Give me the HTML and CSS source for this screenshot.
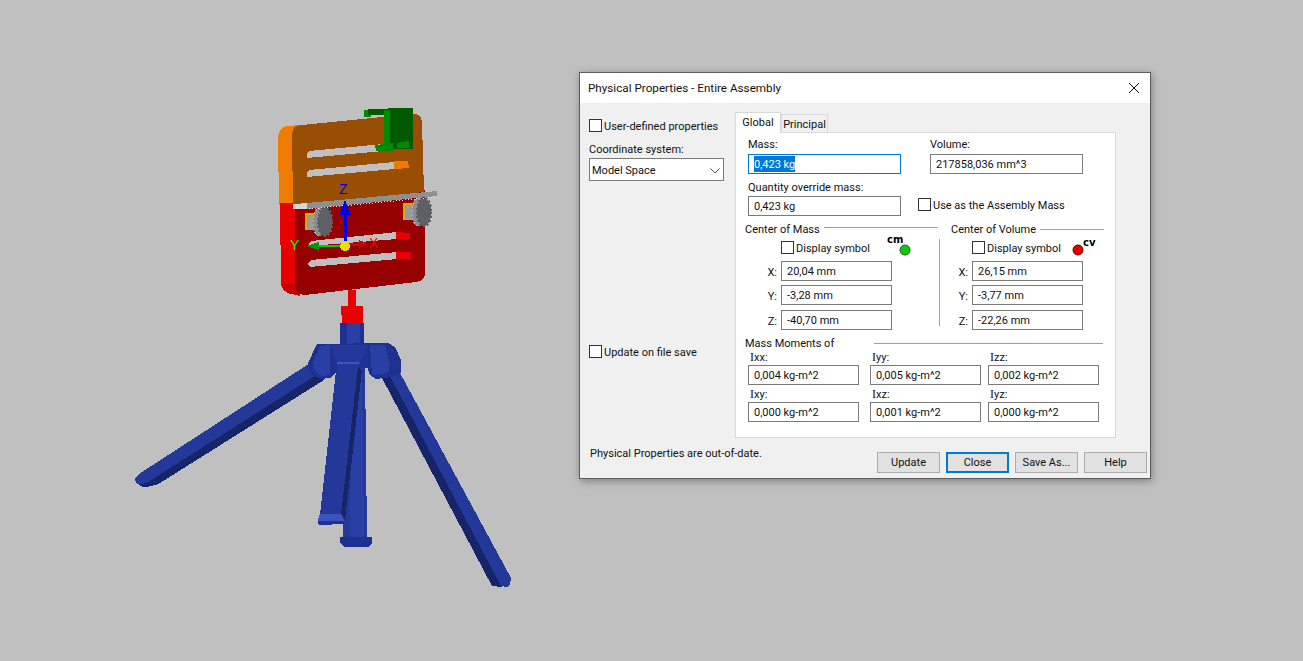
FILE: index.html
```html
<!DOCTYPE html>
<html>
<head>
    <title>Physical Properties - Entire Assembly</title>
    <link rel="stylesheet" href="styles.css">
</head>
<body>
    <svg class="model" viewBox="0 0 1303 661" width="1303" height="661" shape-rendering="crispEdges">
        <!-- tripod -->
        <path fill="#16246a" d="M318,372 L324,380 L160,483 Q152,487 143,487 L138,484 Z"/>
        <path fill="#24389a" d="M307,365 L318,374 L148,482 Q140,486 136,483 L135,479 Q137,475 142,472 Z"/>
        <path fill="#24389a" d="M346,365 L365,365 L367,537 L343,537 Z"/>
        <path fill="#2a3fa6" d="M352,365 L362,365 L364,537 L350,537 Z"/>
        <path fill="#1f3190" d="M340,537 L372,537 L372,543 L369,547 L344,547 L340,543 Z"/>
        <path fill="#24389a" d="M337,362 L360,366 L342,515 L320,515 Z"/>
        <path fill="#16246a" d="M358,367 L362,370 L345,520 L341,514 Z"/>
        <path fill="#3d52bd" d="M320,514 L342,514 L344,521 L318,521 L319,516 Z"/>
        <path fill="#1f3190" d="M318,521 L343,521 L343,524 L320,525 L318,524 Z"/>
        <path fill="#16246a" d="M382,378 L392,377 L502,587 L492,586 Z"/>
        <path fill="#24389a" d="M390,376 L400,373 L511,578 L510,585 L507,587 L501,586 Z"/>
        <path fill="#1f3190" d="M340,323 L364,323 L364,346 L340,346 Z"/>
        <path fill="#2a3fa6" d="M347,323 L360,323 L360,346 L347,346 Z"/>
        <path fill="#1f3190" d="M317,344 L388,343 L395,347 L401,360 L401,373 L392,377 L376,379 L369,374 L368,368 L340,368 L330,378 L320,379 L310,374 L308,363 Z"/>
        <path fill="#2a3fa6" d="M320,346 L330,345 L330,375 L322,376 Q314,374 313,362 Z"/>
        <path fill="#2a3fa6" d="M370,345 L385,345 L390,365 L388,373 L372,375 Z"/>
        <path fill="#24389a" d="M330,345 L368,345 L360,362 L337,362 Z"/>
        <path fill="#3d52bd" d="M337,362 L360,362 L359,364 L337,365 Z"/>
        <path fill="#24389a" d="M337,364 L359,364 L358,370 L337,372 Z"/>

        <!-- neck -->
        <rect fill="#e60000" x="348" y="290" width="8" height="17"/>
        <path fill="#e60000" d="M341,306 L363,306 L363,323 L342,323 Z"/>

        <!-- orange and red plates -->
        <path fill="#ef7b00" d="M278,137 Q279,127 288,126 L300,125 L300,205 L279,205 Z"/>
        <path fill="#e60000" d="M280,203 L300,203 L300,296 L292,294 Q282,292 281,284 Z"/>
        <path fill="#c40000" d="M282,284 L296,284 L298,295 L290,294 Q283,291 282,284 Z"/>
        <path fill="#960000" d="M295,205 L425,190 L425,272 Q425,281 416,282 L305,295 Q296,295 295,285 Z"/>
        <path fill="#984f04" d="M292,135 Q292,125 302,125 L412,114 Q421,113 422,122 L424,192 L293,206 Z"/>

        <!-- slots -->
        <path fill="#c0c0c0" d="M309,151 L383,144 L383,151 L307,158 L307,153 Z"/>
        <path fill="#c0c0c0" d="M309,170 L394,162 L394,169 L307,177 L307,172 Z"/>
        <path fill="#ef7b00" d="M394,161 L408,161 L409,168 L394,169 Z"/>
        <path fill="#c0c0c0" d="M311,241 L397,232 L397,239 L309,246 L309,243 Z"/>
        <path fill="#e60000" d="M396,232 L410,233 L410,239 L396,239 Z"/>
        <path fill="#c0c0c0" d="M311,260 L397,252 L397,259 L310,267 L308,264 Z"/>
        <path fill="#e60000" d="M396,252 L411,252 L411,259 L396,259 Z"/>

        <!-- clip -->
        <rect fill="#005a00" x="388" y="108" width="25" height="41"/>
        <rect fill="#008a00" x="364" y="110" width="7" height="7"/>
        <rect fill="#005a00" x="368" y="109" width="22" height="6"/>
        <rect fill="#008a00" x="384" y="110" width="6" height="36"/>
        <path fill="#008a00" d="M375,145 L393,143 L393,151 L376,151 Z"/>
        <path fill="#008a00" d="M397,143 L409,141 L409,148 L397,148 Z"/>

        <!-- gears -->
        <rect fill="#dba800" x="305" y="213" width="10" height="17"/>
        <rect fill="#dba800" x="403" y="203" width="10" height="17"/>
        <rect fill="#9a9a9a" x="307" y="215" width="10" height="14"/>
        <rect fill="#9a9a9a" x="405" y="205" width="10" height="14"/>
        <ellipse fill="#8c8c8c" stroke="#b0b0b0" stroke-dasharray="2 2" cx="319" cy="222" rx="6" ry="14"/>
        <ellipse fill="#8c8c8c" stroke="#b0b0b0" stroke-dasharray="2 2" cx="418" cy="212" rx="6" ry="14"/>
        <ellipse fill="#5f5f66" stroke="#5f5f66" stroke-width="3" stroke-dasharray="2 2" cx="325" cy="222" rx="7" ry="14"/>
        <ellipse fill="#5f5f66" stroke="#5f5f66" stroke-width="3" stroke-dasharray="2 2" cx="424" cy="212" rx="7" ry="14"/>

        <!-- rack -->
        <path fill="#d8d8d8" d="M293,204 L309,203 L309,209 L293,209 Z"/>
        <path fill="#8f8f8f" d="M307,203 L437,191 L437,196 L307,209 Z"/>
        <path fill="none" stroke="#e8e8e8" stroke-width="1" stroke-dasharray="1 2" d="M309,209 L437,197"/>

        <!-- triad -->
        <rect fill="#0000e6" x="344" y="210" width="3" height="33"/>
        <path fill="#0000e6" d="M345,200 L351,215 L339,215 Z"/>
        <rect fill="#00d000" x="316" y="245" width="29" height="2"/>
        <path fill="#009a00" d="M306,246 L319,242 L319,250 Z"/>
        <rect fill="#d00000" x="350" y="243" width="13" height="3"/>
        <path fill="#d00000" d="M367,243 L359,240 L359,248 Z"/>
        <circle fill="#e8e000" cx="345" cy="246" r="5"/>
        <text class="axis-z" x="339" y="194">Z</text>
        <text class="axis-x" x="369" y="248">X</text>
        <text class="axis-y" x="290" y="250">Y</text>
    </svg>

    <div class="dialog">
        <div class="titlebar">
            <span>Physical Properties - Entire Assembly</span>
            <svg class="close-x" width="12" height="12" viewBox="0 0 12 12">
                <path d="M1,1 L11,11 M11,1 L1,11" stroke="#111" fill="none"/>
            </svg>
        </div>
        <div class="dialog-body">
            <div class="side">
                <label class="check side-check"><span class="box"></span>User-defined properties</label>
                <div class="side-label">Coordinate system:</div>
                <div class="select">
                    <span>Model Space</span>
                    <svg width="10" height="6" viewBox="0 0 10 6"><path d="M0.5,0.5 L5,5 L9.5,0.5" stroke="#555" fill="none"/></svg>
                </div>
                <label class="check update-check"><span class="box"></span>Update on file save</label>
            </div>
            <div class="content">
                <div class="tabs">
                    <div class="tab tab-active">Global</div>
                    <div class="tab">Principal</div>
                </div>
                <div class="panel">
                    <div class="mass-grid">
                        <div>
                            <div class="label">Mass:</div>
                            <div class="field field-focus"><span class="selected">0,423 kg</span></div>
                        </div>
                        <div>
                            <div class="label">Volume:</div>
                            <div class="field">217858,036 mm^3</div>
                        </div>
                        <div>
                            <div class="label label-override">Quantity override mass:</div>
                            <div class="field">0,423 kg</div>
                        </div>
                        <label class="check assembly-check"><span class="box"></span>Use as the Assembly Mass</label>
                    </div>

                    <div class="centers">
                        <div class="center center-mass">
                            <div class="heading"><span>Center of Mass</span><i class="rule"></i></div>
                            <div class="symbol-row">
                                <label class="check"><span class="box"></span>Display symbol</label>
                                <svg class="symbol" width="26" height="24" viewBox="0 0 26 24">
                                    <text class="symbol-text" x="1" y="11">cm</text>
                                    <circle cx="19" cy="18" r="5" fill="#12c612" stroke="#0a6a0a"/>
                                </svg>
                            </div>
                            <div class="coord"><span>X:</span><div class="field">20,04 mm</div></div>
                            <div class="coord"><span>Y:</span><div class="field">-3,28 mm</div></div>
                            <div class="coord"><span>Z:</span><div class="field">-40,70 mm</div></div>
                        </div>
                        <div class="divider"></div>
                        <div class="center center-volume">
                            <div class="heading"><span>Center of Volume</span><i class="rule"></i></div>
                            <div class="symbol-row">
                                <label class="check"><span class="box"></span>Display symbol</label>
                                <svg class="symbol" width="28" height="24" viewBox="0 0 28 24">
                                    <circle cx="8" cy="18" r="5" fill="#e00000" stroke="#700000"/>
                                    <text class="symbol-text" x="13" y="14">cv</text>
                                </svg>
                            </div>
                            <div class="coord"><span>X:</span><div class="field">26,15 mm</div></div>
                            <div class="coord"><span>Y:</span><div class="field">-3,77 mm</div></div>
                            <div class="coord"><span>Z:</span><div class="field">-22,26 mm</div></div>
                        </div>
                    </div>

                    <div class="moments-heading"><span>Mass Moments of</span><i class="rule"></i></div>
                    <div class="moments">
                        <div><div class="moment-label"><b>I</b>xx:</div><div class="field">0,004 kg-m^2</div></div>
                        <div><div class="moment-label"><b>I</b>yy:</div><div class="field">0,005 kg-m^2</div></div>
                        <div><div class="moment-label"><b>I</b>zz:</div><div class="field">0,002 kg-m^2</div></div>
                        <div><div class="moment-label"><b>I</b>xy:</div><div class="field">0,000 kg-m^2</div></div>
                        <div><div class="moment-label"><b>I</b>xz:</div><div class="field">0,001 kg-m^2</div></div>
                        <div><div class="moment-label"><b>I</b>yz:</div><div class="field">0,000 kg-m^2</div></div>
                    </div>
                </div>
            </div>
        </div>
        <div class="footer">
            <div class="status">Physical Properties are out-of-date.</div>
            <div class="buttons">
                <button class="btn">Update</button>
                <button class="btn btn-default">Close</button>
                <button class="btn">Save As...</button>
                <button class="btn">Help</button>
            </div>
        </div>
    </div>
</body>
</html>
```

FILE: styles.css
```css
html, body {
    margin: 0;
    height: 100%;
}
body {
    background: #c0c0c0;
    font-family: Roboto, "Liberation Sans", sans-serif;
    font-size: 11px;
    color: #111;
    overflow: hidden;
}

/* 3d viewport */
.model {
    position: absolute;
    left: 0;
    top: 0;
}
.axis-z, .axis-x, .axis-y {
    font-family: "Liberation Sans", sans-serif;
    font-size: 14px;
}
.axis-z { fill: #0000e6; }
.axis-x { fill: #ff0000; }
.axis-y { fill: #00ff00; }

/* dialog window */
.dialog {
    position: absolute;
    left: 579px;
    top: 72px;
    width: 572px;
    height: 407px;
    box-sizing: border-box;
    border: 1px solid #5c5c5c;
    background: #f0f0f0;
    box-shadow: 1px 2px 8px rgba(0, 0, 0, 0.35);
}
.titlebar {
    height: 30px;
    background: #fff;
    padding: 0 10px 0 8px;
    display: flex;
    align-items: center;
    justify-content: space-between;
    font-size: 11.7px;
}
.dialog-body {
    display: flex;
    padding-left: 9px;
    height: 335px;
}
.side {
    width: 135px;
    margin-right: 11px;
    display: flex;
    flex-direction: column;
}
.check {
    display: flex;
    align-items: center;
    height: 13px;
    box-sizing: border-box;
    padding-top: 2px;
    white-space: nowrap;
}
.box {
    width: 11px;
    height: 11px;
    border: 1px solid #333;
    background: #fff;
    margin: -2px 2px 0 0;
    flex: none;
}
.side-check { margin-top: 16px; }
.side-label {
    margin-top: 10px;
    line-height: 16px;
}
.select {
    height: 23px;
    box-sizing: border-box;
    border: 1px solid #7a7a7a;
    background: #fff;
    padding: 2px 3px 0 2px;
    display: flex;
    align-items: center;
    justify-content: space-between;
}
.update-check { margin-top: 164px; }

/* tabs */
.content {
    width: 381px;
    padding-top: 9px;
}
.tabs {
    display: flex;
    align-items: flex-end;
    height: 20px;
    position: relative;
    z-index: 1;
}
.tab {
    height: 18px;
    box-sizing: border-box;
    width: 47px;
    border: 1px solid #d9d9d9;
    border-bottom: 0;
    text-align: center;
    line-height: 19px;
}
.tab-active {
    height: 21px;
    width: 46px;
    background: #fff;
    margin-bottom: -1px;
    line-height: 19px;
}
.panel {
    height: 306px;
    box-sizing: border-box;
    border: 1px solid #d9d9d9;
    background: #fff;
}

/* fields */
.field {
    height: 20px;
    box-sizing: border-box;
    border: 1px solid #7a7a7a;
    background: #fff;
    padding-left: 5px;
    line-height: 20px;
    white-space: nowrap;
}
.field-focus {
    border-color: #0078d7;
    line-height: 18px;
}
.selected {
    display: inline-block;
    background: #0078d7;
    color: #fff;
    height: 16px;
    line-height: 18px;
    margin-top: 1px;
    vertical-align: top;
}
.label {
    line-height: 16px;
    margin: 4px 0 1px;
}
.label-override {
    margin: 6px 0 0;
}
.mass-grid {
    display: grid;
    grid-template-columns: 153px 153px;
    column-gap: 29px;
    padding-left: 12px;
}
.assembly-check {
    margin: 24px 0 0 -12px;
}

/* centers */
.centers {
    display: flex;
    margin-top: 4px;
}
.center-mass {
    width: 193px;
    margin-left: 9px;
}
.center-volume {
    width: 153px;
    margin-left: 11px;
}
.divider {
    width: 1px;
    height: 87px;
    margin: 19px 0 0 1px;
    background: #a0a0a0;
}
.heading {
    display: flex;
    align-items: center;
    height: 16px;
}
.heading span { padding-top: 2px; }
.rule {
    flex: 1;
    height: 1px;
    background: #a0a0a0;
    margin-left: 4px;
}
.center-mass .rule { margin-top: -2px; }
.center-volume .rule { margin-top: 2px; }
.symbol-row {
    display: flex;
    justify-content: space-between;
    height: 13px;
    margin-top: 5px;
}
.center-mass .symbol-row { margin-left: 36px; }
.center-volume .symbol-row { margin-left: 21px; }
.symbol {
    margin-top: -9px;
    flex: none;
}
.center-mass .symbol { margin-right: 26px; }
.center-volume .symbol { margin-right: 6px; }
.symbol-text {
    font-family: "DejaVu Sans", sans-serif;
    font-size: 10px;
    font-weight: bold;
    fill: #000;
}
.coord {
    display: flex;
    justify-content: flex-end;
    align-items: center;
    margin-top: 4px;
}
.coord span { margin: 2px 4px 0 0; }
.coord .field { width: 111px; }
.center-mass .coord { padding-right: 46px; }
.center-volume .coord { padding-right: 21px; }
.symbol-row + .coord { margin-top: 7px; }
.coord:last-child { margin-top: 5px; }

/* moments */
.moments-heading {
    display: flex;
    align-items: center;
    height: 14px;
    margin: 5px 0 0 9px;
    width: 358px;
}
.moments-heading span { padding-top: 2px; }
.moments-heading .rule {
    margin-left: 40px;
    margin-top: 2px;
}
.moments {
    display: grid;
    grid-template-columns: 122px 118px 111px;
    padding-left: 12px;
    row-gap: 2px;
    margin-top: 1px;
}
.moments .field { width: 111px; }
.moment-label {
    line-height: 15px;
    margin-left: 2px;
}
.moment-label b {
    font-family: "Liberation Serif", serif;
    font-size: 12px;
    font-weight: normal;
}

/* footer */
.footer {
    display: flex;
    justify-content: space-between;
    align-items: flex-start;
    padding: 6px 3px 0 10px;
}
.status {
    margin-top: 2px;
    line-height: 16px;
}
.buttons {
    display: flex;
    gap: 6px;
    margin-top: 8px;
}
.btn {
    width: 63px;
    height: 21px;
    box-sizing: border-box;
    border: 1px solid #adadad;
    background: #e1e1e1;
    font: inherit;
    color: #111;
    padding: 0;
}
.btn-default {
    border: 2px solid #0078d7;
}
```
